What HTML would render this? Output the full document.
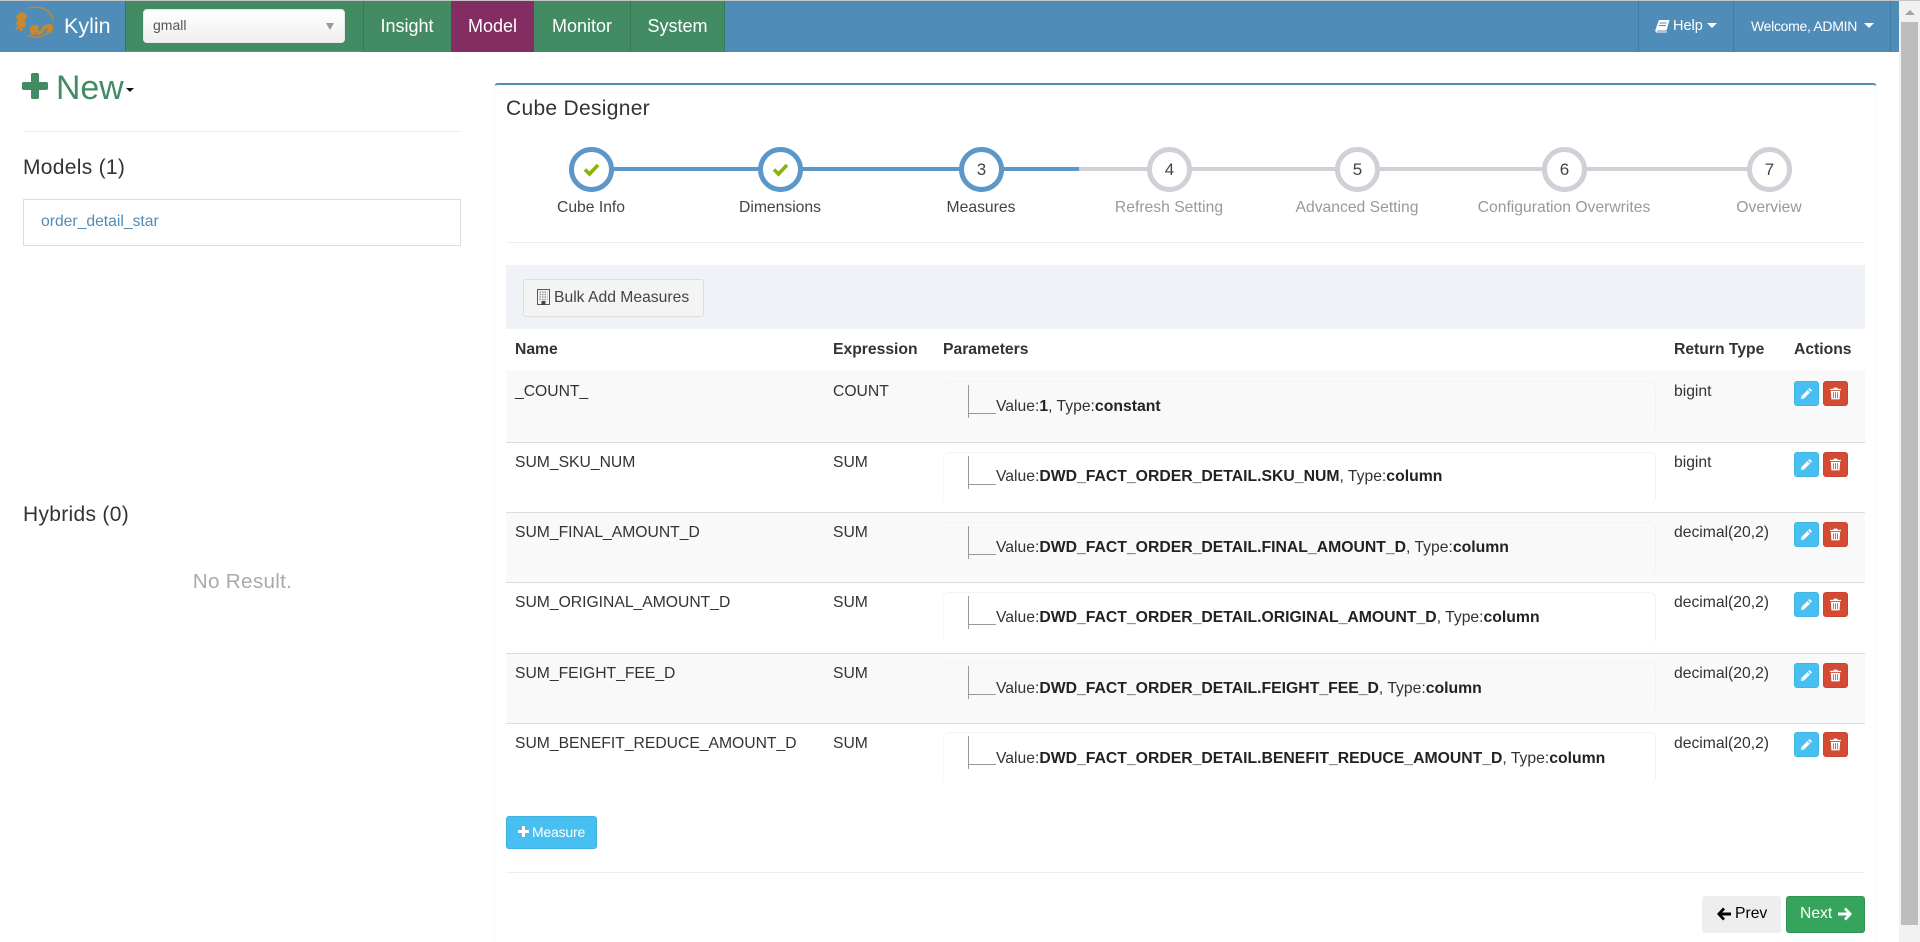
<!DOCTYPE html>
<html><head><meta charset="utf-8"><title>Kylin</title>
<style>
html,body{margin:0;padding:0;width:1920px;height:942px;overflow:hidden;background:#fff}
body{position:relative;font-family:"Liberation Sans",Arial,sans-serif;font-size:15.7px;color:#333}
.a{position:absolute;white-space:nowrap;line-height:20px}
.bx{position:absolute;box-sizing:border-box}
.nav{color:#fff;font-size:18px;top:16px;text-align:center}
.sep{position:absolute;top:1px;height:51px;width:1px;background:#3f7ca6}
.h{font-family:"Liberation Sans",sans-serif;font-size:21px;color:#333;letter-spacing:.3px}
.c{position:absolute;box-sizing:border-box;width:45px;height:45px;border-radius:50%;top:147px;border:5px solid #5c97c9;background:#fff;text-align:center;line-height:35px;font-size:17px;color:#444}
.c.g{border-color:#ced1d6}
.c svg{position:absolute;left:9px;top:9px}
.l{position:absolute;top:198px;width:240px;text-align:center;line-height:20px;white-space:nowrap;color:#444}
.l.g{color:#999}
.th{position:absolute;top:340px;font-weight:bold;line-height:20px;white-space:nowrap;color:#333}
.row{position:absolute;left:506px;width:1359px;height:69px;border-bottom:1px solid #dcdcdc;box-sizing:content-box}
.row.o{background:#f9f9f9}
.row .t{position:absolute;top:10px;line-height:20px;white-space:nowrap}
.row .pb{position:absolute;left:437px;top:9px;width:713px;height:52px;border:1px solid #f3f3f3;border-left-color:#f8f8f8;border-bottom:0;border-radius:6px;box-sizing:border-box}
.row .v{position:absolute;left:462px;top:13px;width:1px;height:33px;background:#999}
.row .hz{position:absolute;left:462px;top:41px;width:28px;height:1px;background:#999}
.row .val{position:absolute;left:490px;top:25px;line-height:20px;white-space:nowrap}
.row .e,.row .d{position:absolute;top:9px;width:25px;height:25px;border-radius:3px;box-sizing:border-box}
.row .e{left:1288px;background:#47c0f1;border:1px solid #3fb6e6}
.row .d{left:1317px;background:#d34b35;border:1px solid #c9432e}
.row .e svg{position:absolute;left:5px;top:5px}
.row .d svg{position:absolute;left:6px;top:5px}
b{color:#222;font-size:15.78px}
</style></head><body>

<div class="bx" style="left:0;top:0;width:1920px;height:1px;background:#c4c4c4"></div>
<div class="bx" style="left:0;top:1px;width:1899px;height:51px;background:#508cb8"></div>

<!-- logo -->
<svg class="bx" style="left:10px;top:3px" width="50" height="46" viewBox="0 0 50 46">
<g fill="none" stroke="#c8882e" stroke-width="1.300">
<path d="M20 5C30 2 42 8 43 17M41 25C38 33 28 37 17 32"/>
</g>
<g fill="#c8882e">
<path d="M8 11l4-2 3 1 2 3-1 3-2 0 2 4-1 4-3 1 1 3-3 0-1-3-2 2-2-1 3-3-2-3 2-3-2-2 1-3z"/>
<path d="M20 27c0-4 4-6 7-5 2 1 2 4 1 6l3-1c1-4 4-6 8-6 3 0 5 3 4 6-1 2-4 4-6 3l-1-3 3-1-3-1-2 3-2 3-5 1-1-2-2 2h-3z"/>
</g>
</svg>
<div class="a" style="left:64px;top:15px;color:#fff;font-size:21.5px;line-height:22px">Kylin</div>

<!-- green block -->
<div class="bx" style="left:125px;top:1px;width:238px;height:50px;background:#428b63;border-left:1px solid #367a55"></div>
<div class="bx" style="left:143px;top:9px;width:202px;height:34px;border-radius:4px;background:linear-gradient(#fff,#efefef);border:1px solid #e8e8e8"></div>
<div class="a" style="left:153px;top:15px;color:#555;font-size:14px">gmall</div>
<div class="bx" style="left:326px;top:23px;width:0;height:0;border-left:4px solid transparent;border-right:4px solid transparent;border-top:7px solid #999"></div>

<div class="bx" style="left:363px;top:1px;width:88px;height:51px;background:#428b63;border-left:1px solid #367a55"></div>
<div class="bx" style="left:451px;top:1px;width:83px;height:51px;background:#832d62"></div>
<div class="bx" style="left:534px;top:1px;width:96px;height:51px;background:#428b63"></div>
<div class="bx" style="left:630px;top:1px;width:95px;height:51px;background:#428b63;border-left:1px solid #367a55;border-right:1px solid #367a55"></div>
<div class="a nav" style="left:363px;width:88px">Insight</div>
<div class="a nav" style="left:451px;width:83px">Model</div>
<div class="a nav" style="left:534px;width:96px">Monitor</div>
<div class="a nav" style="left:630px;width:95px">System</div>

<div class="sep" style="left:1638px"></div>
<div class="sep" style="left:1733px"></div>
<div class="sep" style="left:1890px"></div>
<svg class="bx" style="left:1655px;top:19px" width="15" height="14" viewBox="0 0 15 14"><path fill="#fff" d="M4 1h10.500l-3 10.500H2.500c-.8 0-1 .9-.3 1H12l-.3 1H2C.5 13.500 0 12 .5 10.500z"/><path stroke="#508cb8" d="M4.500 4h7M4 6.500h7"/></svg>
<div class="a" style="left:1673px;top:16px;color:#fff;font-size:14.5px">Help</div>
<div class="bx" style="left:1707px;top:23px;width:0;height:0;border-left:5px solid transparent;border-right:5px solid transparent;border-top:5px solid #fff"></div>
<div class="a" style="left:1751px;top:16px;color:#fff;font-size:14px;letter-spacing:-.3px">Welcome, ADMIN</div>
<div class="bx" style="left:1864px;top:23px;width:0;height:0;border-left:5px solid transparent;border-right:5px solid transparent;border-top:5px solid #fff"></div>

<!-- scrollbar -->
<div class="bx" style="left:1899px;top:1px;width:21px;height:941px;background:#f1f1f1"></div>
<div class="bx" style="left:1901px;top:22px;width:17px;height:903px;background:#bdbdbd"></div>
<div class="bx" style="left:1905px;top:10px;width:0;height:0;border-left:5px solid transparent;border-right:5px solid transparent;border-bottom:5px solid #a3a3a3"></div>

<!-- sidebar -->
<svg class="bx" style="left:22px;top:73px" width="26" height="26" viewBox="0 0 26 26"><path fill="#428b63" d="M9 1.500c0-.8.7-1.500 1.500-1.500h5c.8 0 1.500.7 1.500 1.500V9h7.500c.8 0 1.500.7 1.500 1.500v5c0 .8-.7 1.500-1.500 1.500H17v7.500c0 .8-.7 1.500-1.500 1.500h-5C9.700 26 9 25.300 9 24.500V17H1.500C.7 17 0 16.300 0 15.500v-5C0 9.700.7 9 1.500 9H9z"/></svg>
<div class="a" style="left:56px;top:70px;color:#428b63;font-size:33.800px;line-height:36px">New</div>
<div class="bx" style="left:126px;top:88px;width:0;height:0;border-left:4px solid transparent;border-right:4px solid transparent;border-top:4px solid #111"></div>
<div class="bx" style="left:23px;top:131px;width:438px;height:1px;background:#eee"></div>
<div class="a h" style="left:23px;top:158px">Models (1)</div>
<div class="bx" style="left:23px;top:199px;width:438px;height:47px;border:1px solid #ddd"></div>
<div class="a" style="left:41px;top:212px;color:#508cb8">order_detail_star</div>
<div class="a h" style="left:23px;top:505px">Hybrids (0)</div>
<div class="a" style="left:1px;top:572px;width:483px;text-align:center;color:#aaa;font-size:20.700px;letter-spacing:.3px">No Result.</div>

<!-- panel -->
<div class="bx" style="left:494px;top:83px;width:1383px;height:870px;border:1px solid #f7f7f7;border-top:2px solid #508cb8;border-radius:4px 4px 0 0"></div>
<div class="a h" style="left:506px;top:99px">Cube Designer</div>

<!-- steps -->
<div class="bx" style="left:592px;top:167px;width:487px;height:4px;background:#5c97c9"></div>
<div class="bx" style="left:1079px;top:167px;width:690px;height:4px;background:#ced1d6"></div>
<div class="c" style="left:569px"><svg width="17" height="17" viewBox="0 0 17 17"><path fill="none" stroke="#8cb30a" stroke-width="3.600" d="M2 8.500l4.500 4.500L15 4"/></svg></div>
<div class="c" style="left:758px"><svg width="17" height="17" viewBox="0 0 17 17"><path fill="none" stroke="#8cb30a" stroke-width="3.600" d="M2 8.500l4.500 4.500L15 4"/></svg></div>
<div class="c" style="left:959px">3</div>
<div class="c g" style="left:1147px">4</div>
<div class="c g" style="left:1335px">5</div>
<div class="c g" style="left:1542px">6</div>
<div class="c g" style="left:1747px">7</div>
<div class="l" style="left:471px">Cube Info</div>
<div class="l" style="left:660px">Dimensions</div>
<div class="l" style="left:861px">Measures</div>
<div class="l g" style="left:1049px">Refresh Setting</div>
<div class="l g" style="left:1237px">Advanced Setting</div>
<div class="l g" style="left:1444px">Configuration Overwrites</div>
<div class="l g" style="left:1649px">Overview</div>
<div class="bx" style="left:506px;top:242px;width:1359px;height:1px;background:#eee"></div>

<!-- toolbar -->
<div class="bx" style="left:506px;top:265px;width:1359px;height:64px;background:#eff2f6"></div>
<div class="bx" style="left:523px;top:279px;width:181px;height:38px;background:#f4f4f4;border:1px solid #ddd;border-radius:3px"></div>
<svg class="bx" style="left:537px;top:289px" width="13" height="16" viewBox="0 0 13 16"><rect x=".5" y=".5" width="12" height="15" fill="#f4f4f4" stroke="#5a5550"/><path stroke="#999" stroke-width="1.600" stroke-dasharray="1.500 1" d="M2.500 3h8M2.500 5.500h8M2.500 8h8M2.500 10.500h8"/><rect x="4.500" y="12" width="4" height="4" fill="#444"/></svg>
<div class="a" style="left:554px;top:288px;color:#444">Bulk Add Measures</div>

<!-- table header -->
<div class="th" style="left:515px">Name</div>
<div class="th" style="left:833px">Expression</div>
<div class="th" style="left:943px">Parameters</div>
<div class="th" style="left:1674px">Return Type</div>
<div class="th" style="left:1794px">Actions</div>

<!-- rows -->
<div class="row o" style="top:370px;height:72px">
<div class="t" style="left:9px;top:12px">_COUNT_</div><div class="t" style="left:327px;top:12px">COUNT</div>
<div class="pb" style="top:11px"></div><div class="v" style="top:15px"></div><div class="hz" style="top:43px"></div>
<div class="val" style="top:27px">Value:<b>1</b>, Type:<b>constant</b></div>
<div class="t" style="left:1168px;top:12px">bigint</div>
<div class="e" style="top:11px"><svg width="13" height="13" viewBox="0 0 13 13"><path fill="#fff" d="M9.500 1l2.500 2.500-1.300 1.300-2.500-2.500zM7.500 3l2.500 2.500L4 11.500 1 12l.5-3z"/></svg></div>
<div class="d" style="top:11px"><svg width="11" height="13" viewBox="0 0 13 14"><path fill="#fff" d="M4.500 0h4l.7 1.500H13V3H0V1.500h3.800zM1 4h11l-.7 10H1.700zM3.500 5.500v7h1v-7zM6 5.500v7h1v-7zM8.500 5.500v7h1v-7z" fill-rule="evenodd"/></svg></div>
</div>

<div class="row" style="top:443px">
<div class="t" style="left:9px">SUM_SKU_NUM</div><div class="t" style="left:327px">SUM</div>
<div class="pb"></div><div class="v"></div><div class="hz"></div>
<div class="val" style="top:24px">Value:<b>DWD_FACT_ORDER_DETAIL.SKU_NUM</b>, Type:<b>column</b></div>
<div class="t" style="left:1168px">bigint</div>
<div class="e"><svg width="13" height="13" viewBox="0 0 13 13"><path fill="#fff" d="M9.500 1l2.500 2.500-1.300 1.300-2.500-2.500zM7.500 3l2.500 2.500L4 11.500 1 12l.5-3z"/></svg></div>
<div class="d"><svg width="11" height="13" viewBox="0 0 13 14"><path fill="#fff" d="M4.500 0h4l.7 1.500H13V3H0V1.500h3.800zM1 4h11l-.7 10H1.700zM3.500 5.500v7h1v-7zM6 5.500v7h1v-7zM8.500 5.500v7h1v-7z" fill-rule="evenodd"/></svg></div>
</div>

<div class="row o" style="top:513px">
<div class="t" style="left:9px">SUM_FINAL_AMOUNT_D</div><div class="t" style="left:327px">SUM</div>
<div class="pb"></div><div class="v"></div><div class="hz"></div>
<div class="val">Value:<b>DWD_FACT_ORDER_DETAIL.FINAL_AMOUNT_D</b>, Type:<b>column</b></div>
<div class="t" style="left:1168px">decimal(20,2)</div>
<div class="e"><svg width="13" height="13" viewBox="0 0 13 13"><path fill="#fff" d="M9.500 1l2.500 2.500-1.300 1.300-2.500-2.500zM7.500 3l2.500 2.500L4 11.500 1 12l.5-3z"/></svg></div>
<div class="d"><svg width="11" height="13" viewBox="0 0 13 14"><path fill="#fff" d="M4.500 0h4l.7 1.500H13V3H0V1.500h3.800zM1 4h11l-.7 10H1.700zM3.500 5.500v7h1v-7zM6 5.500v7h1v-7zM8.500 5.500v7h1v-7z" fill-rule="evenodd"/></svg></div>
</div>

<div class="row" style="top:583px;height:70px">
<div class="t" style="left:9px">SUM_ORIGINAL_AMOUNT_D</div><div class="t" style="left:327px">SUM</div>
<div class="pb"></div><div class="v"></div><div class="hz"></div>
<div class="val">Value:<b>DWD_FACT_ORDER_DETAIL.ORIGINAL_AMOUNT_D</b>, Type:<b>column</b></div>
<div class="t" style="left:1168px">decimal(20,2)</div>
<div class="e"><svg width="13" height="13" viewBox="0 0 13 13"><path fill="#fff" d="M9.500 1l2.500 2.500-1.300 1.300-2.500-2.500zM7.500 3l2.500 2.500L4 11.500 1 12l.5-3z"/></svg></div>
<div class="d"><svg width="11" height="13" viewBox="0 0 13 14"><path fill="#fff" d="M4.500 0h4l.7 1.500H13V3H0V1.500h3.800zM1 4h11l-.7 10H1.700zM3.500 5.500v7h1v-7zM6 5.500v7h1v-7zM8.500 5.500v7h1v-7z" fill-rule="evenodd"/></svg></div>
</div>

<div class="row o" style="top:654px">
<div class="t" style="left:9px">SUM_FEIGHT_FEE_D</div><div class="t" style="left:327px">SUM</div>
<div class="pb" style="top:8px"></div><div class="v" style="top:12px"></div><div class="hz" style="top:40px"></div>
<div class="val">Value:<b>DWD_FACT_ORDER_DETAIL.FEIGHT_FEE_D</b>, Type:<b>column</b></div>
<div class="t" style="left:1168px">decimal(20,2)</div>
<div class="e"><svg width="13" height="13" viewBox="0 0 13 13"><path fill="#fff" d="M9.500 1l2.500 2.500-1.300 1.300-2.500-2.500zM7.500 3l2.500 2.500L4 11.500 1 12l.5-3z"/></svg></div>
<div class="d"><svg width="11" height="13" viewBox="0 0 13 14"><path fill="#fff" d="M4.500 0h4l.7 1.500H13V3H0V1.500h3.800zM1 4h11l-.7 10H1.700zM3.500 5.500v7h1v-7zM6 5.500v7h1v-7zM8.500 5.500v7h1v-7z" fill-rule="evenodd"/></svg></div>
</div>

<div class="row" style="top:724px;border-bottom:0">
<div class="t" style="left:9px">SUM_BENEFIT_REDUCE_AMOUNT_D</div><div class="t" style="left:327px">SUM</div>
<div class="pb" style="top:8px"></div><div class="v" style="top:12px"></div><div class="hz" style="top:40px"></div>
<div class="val">Value:<b>DWD_FACT_ORDER_DETAIL.BENEFIT_REDUCE_AMOUNT_D</b>, Type:<b>column</b></div>
<div class="t" style="left:1168px">decimal(20,2)</div>
<div class="e" style="top:8px"><svg width="13" height="13" viewBox="0 0 13 13"><path fill="#fff" d="M9.500 1l2.500 2.500-1.300 1.300-2.500-2.500zM7.500 3l2.500 2.500L4 11.500 1 12l.5-3z"/></svg></div>
<div class="d" style="top:8px"><svg width="11" height="13" viewBox="0 0 13 14"><path fill="#fff" d="M4.500 0h4l.7 1.500H13V3H0V1.500h3.800zM1 4h11l-.7 10H1.700zM3.500 5.500v7h1v-7zM6 5.500v7h1v-7zM8.500 5.500v7h1v-7z" fill-rule="evenodd"/></svg></div>
</div>

<!-- bottom -->
<div class="bx" style="left:506px;top:816px;width:91px;height:33px;background:#47c0f1;border:1px solid #3db2e0;border-radius:3px"></div>
<svg class="bx" style="left:518px;top:826px" width="11" height="11" viewBox="0 0 11 11"><path fill="#fff" d="M4 0h3v4h4v3H7v4H4V7H0V4h4z"/></svg>
<div class="a" style="left:532px;top:822px;color:#fff;font-size:14px;letter-spacing:-.2px">Measure</div>
<div class="bx" style="left:506px;top:872px;width:1359px;height:1px;background:#eee"></div>

<div class="bx" style="left:1702px;top:896px;width:79px;height:37px;background:#eee;border-radius:3px"></div>
<svg class="bx" style="left:1717px;top:907px" width="14" height="14" viewBox="0 0 14 14"><path fill="#000" d="M6 .5l2 2-3 3h9v3H5l3 3-2 2L0 7z"/></svg>
<div class="a" style="left:1735px;top:904px;color:#000">Prev</div>
<div class="bx" style="left:1786px;top:896px;width:79px;height:37px;background:#36a45c;border:1px solid #2f9552;border-radius:3px"></div>
<div class="a" style="left:1800px;top:904px;color:#fff">Next</div>
<svg class="bx" style="left:1838px;top:907px" width="14" height="14" viewBox="0 0 14 14"><path fill="#fff" d="M8 .5l-2 2 3 3H0v3h9l-3 3 2 2L14 7z"/></svg>

</body></html>
